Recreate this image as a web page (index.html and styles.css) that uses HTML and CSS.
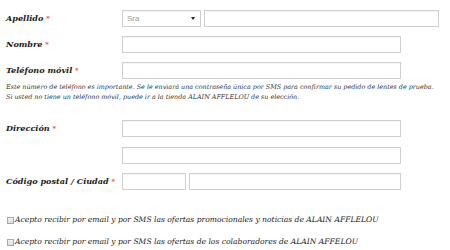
FILE: index.html
```html
<!DOCTYPE html>
<html lang="es">
<head>
<meta charset="utf-8">
<link rel="stylesheet" href="styles.css">
</head>
<body>
<form class="form">
  <div class="row r-apellido">
    <label class="lbl">Apellido <span class="req">*</span></label>
    <div class="fields">
      <div class="select"><span class="sel-text">Sra</span><span class="arrow"></span></div>
      <div class="input w-long"></div>
    </div>
  </div>
  <div class="row r-nombre">
    <label class="lbl">Nombre <span class="req">*</span></label>
    <div class="fields"><div class="input w-full"></div></div>
  </div>
  <div class="row r-tel">
    <label class="lbl">Teléfono móvil <span class="req">*</span></label>
    <div class="fields"><div class="input w-full"></div></div>
  </div>
  <p class="help">Este número de teléfono es importante. Se le enviará una contraseña única por SMS para confirmar su pedido de lentes de prueba.<br>Si usted no tiene un teléfono móvil, puede ir a la tienda ALAIN AFFLELOU de su elección.</p>
  <div class="row r-dir">
    <label class="lbl">Dirección <span class="req">*</span></label>
    <div class="fields"><div class="input w-full"></div></div>
  </div>
  <div class="row r-dir2">
    <span class="lbl"></span>
    <div class="fields"><div class="input w-full"></div></div>
  </div>
  <div class="row r-cp">
    <label class="lbl">Código postal / Ciudad <span class="req">*</span></label>
    <div class="fields">
      <div class="input w-cp"></div>
      <div class="input w-city"></div>
    </div>
  </div>
  <div class="checks">
    <label class="check"><span class="box"></span>Acepto recibir por email y por SMS las ofertas promocionales y noticias de ALAIN AFFLELOU</label>
    <label class="check"><span class="box"></span>Acepto recibir por email y por SMS las ofertas de los colaboradores de ALAIN AFFELOU</label>
  </div>
</form>
</body>
</html>
```
FILE: styles.css
```css
html, body {
  margin: 0;
  padding: 0;
  background: #fff;
}
body {
  width: 450px;
  height: 250px;
  overflow: hidden;
  font-family: "DejaVu Serif", Georgia, serif;
  color: #222;
}
.form {
  display: flex;
  flex-direction: column;
  padding: 10px 0 0 6px;
}
.row {
  display: grid;
  grid-template-columns: 116px 1fr;
  align-items: center;
  height: 17px;
}
.r-nombre { margin-top: 9px; }
.r-tel { margin-top: 9px; }
.r-dir { margin-top: 18px; }
.r-dir2 { margin-top: 10px; }
.r-cp { margin-top: 9px; }
.lbl {
  font-weight: bold;
  font-style: italic;
  font-size: 8.1px;
  color: #1a1a1a;
  position: relative;
  top: -1px;
}
.req {
  color: #e0392f;
  font-weight: normal;
  font-style: normal;
  font-size: 7px;
}
.fields {
  display: flex;
  gap: 3px;
}
.input, .select {
  box-sizing: border-box;
  height: 17px;
  border: 1px solid #cfcfcf;
  background: #fff;
  box-shadow: inset 0 1px 1px rgba(0,0,0,0.04);
}
.select {
  width: 79px;
  display: flex;
  align-items: center;
  justify-content: space-between;
  padding: 0 4px 0 4px;
  font-family: "Liberation Sans", Arial, sans-serif;
  font-size: 8px;
  color: #9a9a9a;
}
.arrow {
  width: 0;
  height: 0;
  border-left: 2.5px solid transparent;
  border-right: 2.5px solid transparent;
  border-top: 3px solid #222;
  margin-right: 1px;
}
.w-long { width: 235px; }
.w-full { width: 279px; }
.w-cp { width: 64px; }
.w-city { width: 212px; }
.help {
  margin: 3px 0 0 0;
  font-style: italic;
  font-size: 6.4px;
  line-height: 10px;
  color: #333;
}
.checks {
  display: flex;
  flex-direction: column;
  gap: 10px;
  margin-top: 24px;
}
.check {
  display: flex;
  align-items: center;
  font-style: italic;
  font-size: 7.6px;
  line-height: 12px;
  color: #222;
}
.box {
  box-sizing: border-box;
  width: 7px;
  height: 7px;
  border: 1px solid #a8a8a8;
  background: linear-gradient(#f4f4f4, #dcdcdc);
  margin: 0 1px 0 1px;
}
```
